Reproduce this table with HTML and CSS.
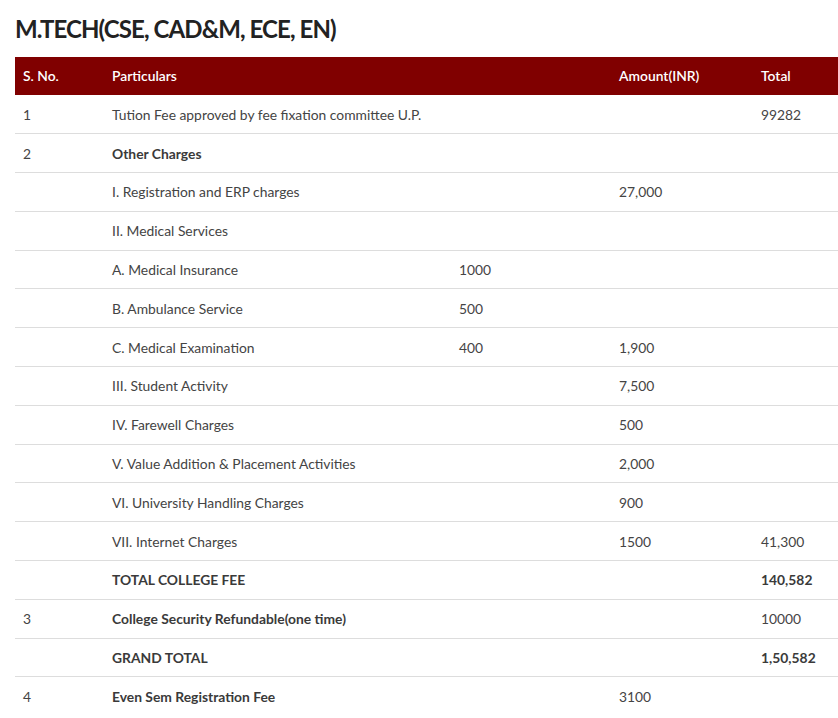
FILE: index.html
```html
<!DOCTYPE html>
<html>
<head>
<meta charset="utf-8">
<link rel="stylesheet" href="styles.css">
</head>
<body>
<div class="page">
  <h2 class="title">M.TECH(CSE, CAD&amp;M, ECE, EN)</h2>
  <table class="fee-table">
    <colgroup>
      <col class="c1"><col class="c2"><col class="c3"><col class="c4"><col class="c5">
    </colgroup>
    <thead>
      <tr><th>S. No.</th><th>Particulars</th><th></th><th>Amount(INR)</th><th>Total</th></tr>
    </thead>
    <tbody>
      <tr><td>1</td><td>Tution Fee approved by fee fixation committee U.P.</td><td></td><td></td><td>99282</td></tr>
      <tr><td>2</td><td class="b">Other Charges</td><td></td><td></td><td></td></tr>
      <tr><td></td><td>I. Registration and ERP charges</td><td></td><td>27,000</td><td></td></tr>
      <tr><td></td><td>II. Medical Services</td><td></td><td></td><td></td></tr>
      <tr><td></td><td>A. Medical Insurance</td><td>1000</td><td></td><td></td></tr>
      <tr><td></td><td>B. Ambulance Service</td><td>500</td><td></td><td></td></tr>
      <tr><td></td><td>C. Medical Examination</td><td>400</td><td>1,900</td><td></td></tr>
      <tr><td></td><td>III. Student Activity</td><td></td><td>7,500</td><td></td></tr>
      <tr><td></td><td>IV. Farewell Charges</td><td></td><td>500</td><td></td></tr>
      <tr><td></td><td>V. Value Addition &amp; Placement Activities</td><td></td><td>2,000</td><td></td></tr>
      <tr><td></td><td>VI. University Handling Charges</td><td></td><td>900</td><td></td></tr>
      <tr><td></td><td>VII. Internet Charges</td><td></td><td>1500</td><td>41,300</td></tr>
      <tr><td></td><td class="b">TOTAL COLLEGE FEE</td><td></td><td></td><td class="b">140,582</td></tr>
      <tr><td>3</td><td class="b">College Security Refundable(one time)</td><td></td><td></td><td>10000</td></tr>
      <tr><td></td><td class="b">GRAND TOTAL</td><td></td><td></td><td class="b">1,50,582</td></tr>
      <tr><td>4</td><td class="b">Even Sem Registration Fee</td><td></td><td>3100</td><td></td></tr>
    </tbody>
  </table>
</div>
</body>
</html>
```

FILE: styles.css
```css
html, body {
  margin: 0;
  padding: 0;
  background: #fff;
  overflow: hidden;
}
body {
  font-family: Lato, "Open Sans", sans-serif;
  color: #444;
}
.page {
  padding: 0 0 0 15px;
}
.title {
  margin: 0 0 14px;
  padding-top: 14px;
  height: 43px;
  box-sizing: border-box;
  font-size: 24px;
  font-weight: 700;
  letter-spacing: -0.9px;
  line-height: 29px;
  color: #222;
}
.fee-table {
  width: 823px;
  border-collapse: collapse;
  table-layout: fixed;
  font-size: 13.85px;
}
.c1 { width: 89px; }
.c2 { width: 347px; }
.c3 { width: 160px; }
.c4 { width: 142px; }
.c5 { width: 85px; }
.fee-table th {
  background: #800000;
  color: #fff;
  font-weight: 600;
  text-align: left;
  height: 38px;
  padding: 0 8px;
  line-height: 18px;
  box-sizing: border-box;
}
.fee-table td {
  height: 38.8px;
  padding: 1px 8px 0;
  line-height: 18px;
  border-bottom: 1px solid #ddd;
  vertical-align: middle;
  box-sizing: border-box;
}
.fee-table tbody tr:last-child td {
  border-bottom: none;
}
.fee-table td.b {
  font-weight: 700;
  color: #3a3a3a;
}
```
